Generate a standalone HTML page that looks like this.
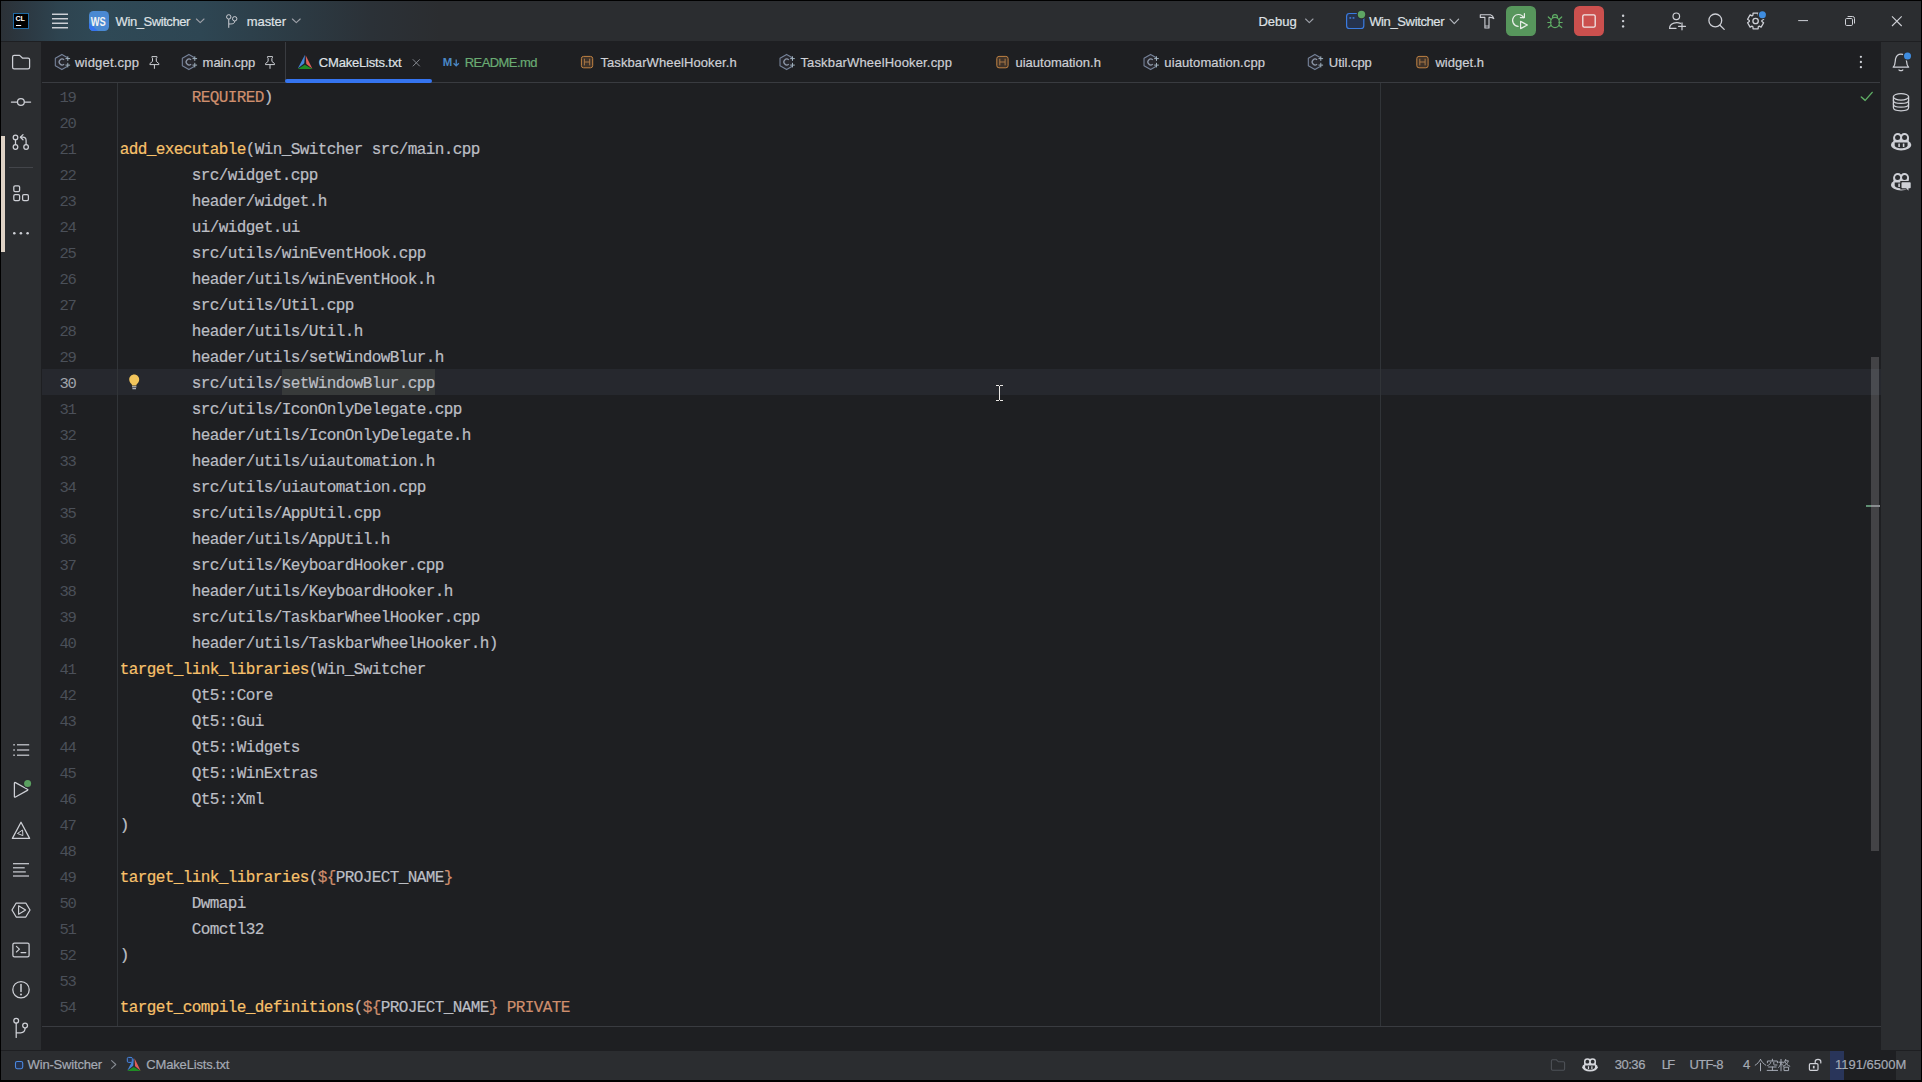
<!DOCTYPE html>
<html><head><meta charset="utf-8"><title>CLion</title>
<style>
html,body{margin:0;padding:0}
body{width:1922px;height:1082px;background:#000;position:relative;overflow:hidden;font-family:"Liberation Sans",sans-serif;}
.abs{position:absolute}
.t{position:absolute;white-space:pre;line-height:20px;font-family:"Liberation Sans",sans-serif;-webkit-text-stroke:0.2px currentColor}
svg{position:absolute;overflow:visible}
#title{position:absolute;left:1px;top:1px;width:1920px;height:40px;background:#2b2d30;}
#titlegrad{position:absolute;left:0;top:0;width:460px;height:40px;background:linear-gradient(90deg,#2b3137 0px,#2c3a44 30px,#2e4450 60px,#2f4956 100px,#2e4653 200px,#2c3a43 300px,#2b3137 370px,#2b2d30 440px);}
#lside{position:absolute;left:1px;top:42px;width:40px;height:1008px;background:#2b2d30;}
#rside{position:absolute;left:1881px;top:42px;width:40px;height:1008px;background:#2b2d30;}
#tabs{position:absolute;left:42px;top:41px;width:1838px;height:41px;background:#1e1f22;border-bottom:1px solid #393b40;}
#editor{position:absolute;left:41px;top:83px;width:1840px;height:967px;background:#1e1f22;overflow:hidden}
#status{position:absolute;left:1px;top:1051px;width:1920px;height:29px;background:#2b2d30;}
.ln{position:absolute;left:1px;width:33.6px;text-align:right;font-family:"Liberation Mono",monospace;font-size:15.5px;letter-spacing:-1.3px;line-height:26px;color:#4b5059;white-space:pre;padding-top:2.4px;height:23.6px}
.cl{position:absolute;left:78.7px;font-family:"Liberation Mono",monospace;font-size:16px;letter-spacing:-0.602px;line-height:26px;color:#bcbec4;white-space:pre;padding-top:2px;height:24px;-webkit-text-stroke:0.2px currentColor}
.f{color:#f8c16b}.k{color:#cf8e6d}
</style></head><body>
<div class="abs" style="left:1px;top:1px;width:1920px;height:1079px;background:#1e1f22"></div>
<div id="title"><div id="titlegrad"></div></div>
<div id="lside"></div><div id="rside"></div><div id="tabs"></div>
<div id="editor">
<div class="abs" style="left:1px;top:286px;width:1839px;height:26px;background:#26282e"></div>
<div class="abs" style="left:76px;top:0;width:1px;height:943px;background:#313438"></div>
<div class="abs" style="left:1339px;top:0;width:1px;height:943px;background:#313438"></div>
<div class="abs" style="left:1px;top:943px;width:1839px;height:1px;background:#393b40"></div>
<div class="abs" style="left:241px;top:286px;width:153px;height:26px;background:#373a3a"></div>
<div class="ln" style="top:0px">19</div>
<div class="cl" style="top:0px">        <span class="k">REQUIRED</span>)</div>
<div class="ln" style="top:26px">20</div>
<div class="ln" style="top:52px">21</div>
<div class="cl" style="top:52px"><span class="f">add_executable</span>(Win_Switcher src/main.cpp</div>
<div class="ln" style="top:78px">22</div>
<div class="cl" style="top:78px">        src/widget.cpp</div>
<div class="ln" style="top:104px">23</div>
<div class="cl" style="top:104px">        header/widget.h</div>
<div class="ln" style="top:130px">24</div>
<div class="cl" style="top:130px">        ui/widget.ui</div>
<div class="ln" style="top:156px">25</div>
<div class="cl" style="top:156px">        src/utils/winEventHook.cpp</div>
<div class="ln" style="top:182px">26</div>
<div class="cl" style="top:182px">        header/utils/winEventHook.h</div>
<div class="ln" style="top:208px">27</div>
<div class="cl" style="top:208px">        src/utils/Util.cpp</div>
<div class="ln" style="top:234px">28</div>
<div class="cl" style="top:234px">        header/utils/Util.h</div>
<div class="ln" style="top:260px">29</div>
<div class="cl" style="top:260px">        header/utils/setWindowBlur.h</div>
<div class="ln" style="top:286px;color:#a1a3ab">30</div>
<div class="cl" style="top:286px">        src/utils/setWindowBlur.cpp</div>
<div class="ln" style="top:312px">31</div>
<div class="cl" style="top:312px">        src/utils/IconOnlyDelegate.cpp</div>
<div class="ln" style="top:338px">32</div>
<div class="cl" style="top:338px">        header/utils/IconOnlyDelegate.h</div>
<div class="ln" style="top:364px">33</div>
<div class="cl" style="top:364px">        header/utils/uiautomation.h</div>
<div class="ln" style="top:390px">34</div>
<div class="cl" style="top:390px">        src/utils/uiautomation.cpp</div>
<div class="ln" style="top:416px">35</div>
<div class="cl" style="top:416px">        src/utils/AppUtil.cpp</div>
<div class="ln" style="top:442px">36</div>
<div class="cl" style="top:442px">        header/utils/AppUtil.h</div>
<div class="ln" style="top:468px">37</div>
<div class="cl" style="top:468px">        src/utils/KeyboardHooker.cpp</div>
<div class="ln" style="top:494px">38</div>
<div class="cl" style="top:494px">        header/utils/KeyboardHooker.h</div>
<div class="ln" style="top:520px">39</div>
<div class="cl" style="top:520px">        src/utils/TaskbarWheelHooker.cpp</div>
<div class="ln" style="top:546px">40</div>
<div class="cl" style="top:546px">        header/utils/TaskbarWheelHooker.h)</div>
<div class="ln" style="top:572px">41</div>
<div class="cl" style="top:572px"><span class="f">target_link_libraries</span>(Win_Switcher</div>
<div class="ln" style="top:598px">42</div>
<div class="cl" style="top:598px">        Qt5::Core</div>
<div class="ln" style="top:624px">43</div>
<div class="cl" style="top:624px">        Qt5::Gui</div>
<div class="ln" style="top:650px">44</div>
<div class="cl" style="top:650px">        Qt5::Widgets</div>
<div class="ln" style="top:676px">45</div>
<div class="cl" style="top:676px">        Qt5::WinExtras</div>
<div class="ln" style="top:702px">46</div>
<div class="cl" style="top:702px">        Qt5::Xml</div>
<div class="ln" style="top:728px">47</div>
<div class="cl" style="top:728px">)</div>
<div class="ln" style="top:754px">48</div>
<div class="ln" style="top:780px">49</div>
<div class="cl" style="top:780px"><span class="f">target_link_libraries</span>(<span class="k">${</span>PROJECT_NAME<span class="k">}</span></div>
<div class="ln" style="top:806px">50</div>
<div class="cl" style="top:806px">        Dwmapi</div>
<div class="ln" style="top:832px">51</div>
<div class="cl" style="top:832px">        Comctl32</div>
<div class="ln" style="top:858px">52</div>
<div class="cl" style="top:858px">)</div>
<div class="ln" style="top:884px">53</div>
<div class="ln" style="top:910px">54</div>
<div class="cl" style="top:910px"><span class="f">target_compile_definitions</span>(<span class="k">${</span>PROJECT_NAME<span class="k">}</span> <span class="k">PRIVATE</span></div>
<div class="abs" style="left:1830px;top:274px;width:8px;height:494px;background:rgba(255,255,255,0.165)"></div>
<div class="abs" style="left:1825px;top:422px;width:5px;height:2px;background:#5f8f73"></div>
<div class="abs" style="left:1830px;top:422px;width:9px;height:2px;background:#8a8c90"></div>
</div>
<div id="status"></div>
<span class="t" style="left:115.60px;top:11.50px;font-size:13px;letter-spacing:-0.431px;color:#dfe1e5;">Win_Switcher</span>
<span class="t" style="left:246.80px;top:11.50px;font-size:13px;letter-spacing:-0.105px;color:#dfe1e5;">master</span>
<span class="t" style="left:1258.40px;top:11.50px;font-size:13px;letter-spacing:0.018px;color:#dfe1e5;">Debug</span>
<span class="t" style="left:1369.20px;top:11.50px;font-size:13px;letter-spacing:-0.372px;color:#dfe1e5;">Win_Switcher</span>
<span class="t" style="left:75.00px;top:52.50px;font-size:13px;letter-spacing:0.205px;color:#ced0d6;">widget.cpp</span>
<span class="t" style="left:202.60px;top:52.50px;font-size:13px;letter-spacing:-0.019px;color:#ced0d6;">main.cpp</span>
<span class="t" style="left:318.80px;top:52.50px;font-size:13px;letter-spacing:-0.189px;color:#dfe1e5;">CMakeLists.txt</span>
<span class="t" style="left:464.80px;top:52.50px;font-size:13px;letter-spacing:-0.588px;color:#6aab73;">README.md</span>
<span class="t" style="left:600.40px;top:52.50px;font-size:13px;letter-spacing:0.100px;color:#ced0d6;">TaskbarWheelHooker.h</span>
<span class="t" style="left:800.40px;top:52.50px;font-size:13px;letter-spacing:0.162px;color:#ced0d6;">TaskbarWheelHooker.cpp</span>
<span class="t" style="left:1015.40px;top:52.50px;font-size:13px;letter-spacing:0.015px;color:#ced0d6;">uiautomation.h</span>
<span class="t" style="left:1164.30px;top:52.50px;font-size:13px;letter-spacing:0.112px;color:#ced0d6;">uiautomation.cpp</span>
<span class="t" style="left:1328.80px;top:52.50px;font-size:13px;letter-spacing:-0.044px;color:#ced0d6;">Util.cpp</span>
<span class="t" style="left:1435.40px;top:52.50px;font-size:13px;letter-spacing:0.035px;color:#ced0d6;">widget.h</span>
<span class="t" style="left:27.60px;top:1054.60px;font-size:13px;letter-spacing:-0.181px;color:#a5aab4;">Win-Switcher</span>
<span class="t" style="left:146.30px;top:1054.60px;font-size:13px;letter-spacing:-0.160px;color:#a5aab4;">CMakeLists.txt</span>
<span class="t" style="left:1614.70px;top:1054.60px;font-size:13px;letter-spacing:-0.466px;color:#a5aab4;">30:36</span>
<span class="t" style="left:1661.80px;top:1054.60px;font-size:13px;letter-spacing:-1.786px;color:#a5aab4;">LF</span>
<span class="t" style="left:1689.60px;top:1054.60px;font-size:13px;letter-spacing:-0.766px;color:#a5aab4;">UTF-8</span>
<span class="t" style="left:1743.00px;top:1054.60px;font-size:13px;letter-spacing:0.000px;color:#a5aab4;">4</span>
<div class="abs" style="left:1830px;top:1051px;width:66px;height:29px;background:#1e1f22"></div><div class="abs" style="left:1830px;top:1051px;width:14px;height:29px;background:#29355a"></div>
<span class="t" style="left:1834.90px;top:1054.60px;font-size:13px;letter-spacing:0.008px;color:#a5aab4;">1191/6500M</span>
<svg width="1922" height="1082" style="left:0;top:0"><rect x="13.5" y="13.5" width="15" height="15" fill="#000" stroke="#1f6aa5" stroke-width="1"/>
<text x="15.4" y="21.3" font-family="Liberation Sans" font-weight="bold" font-size="7.6" fill="#fff" textLength="9.6" lengthAdjust="spacingAndGlyphs">CL</text>
<rect x="16" y="25" width="5.2" height="1" fill="#fff"/>
<rect x="52" y="13.55" width="16" height="1.4" fill="#d6d8dd"/>
<rect x="52" y="18.05" width="16" height="1.4" fill="#d6d8dd"/>
<rect x="52" y="22.55" width="16" height="1.4" fill="#d6d8dd"/>
<rect x="52" y="27.05" width="16" height="1.4" fill="#d6d8dd"/>
<defs><clipPath id="wsclip"><rect x="89" y="11" width="20" height="20" rx="4.5"/></clipPath></defs>
<g clip-path="url(#wsclip)"><rect x="89" y="11" width="20" height="20" fill="#4a89d2"/><path d="M89 23 L98 31 L89 31Z" fill="#3574f0"/></g>
<text x="90.8" y="26" font-family="Liberation Sans" font-weight="bold" font-size="13" fill="#f4f4f4" textLength="15" lengthAdjust="spacingAndGlyphs">WS</text>
<path d="M196.4 19 L200.2 22.7 L204 19" fill="none" stroke="#9da0a8" stroke-width="1.1" stroke-linecap="round" stroke-linejoin="round"/>
<g fill="none" stroke="#ced0d6" stroke-width="1"><circle cx="228.75" cy="16.9" r="2.2"/><circle cx="234.7" cy="18.8" r="2.2"/><path d="M228.75 19.2 V27.8"/><path d="M234.7 21 C234.7 23.6 233 24 229 24"/></g>
<path d="M292.4 19 L296.29999999999995 22.7 L300.2 19" fill="none" stroke="#9da0a8" stroke-width="1.1" stroke-linecap="round" stroke-linejoin="round"/>
<path d="M1305.6 19 L1309.3 22.7 L1313 19" fill="none" stroke="#9da0a8" stroke-width="1.1" stroke-linecap="round" stroke-linejoin="round"/>
<rect x="1346.6" y="13.5" width="17.2" height="15" rx="2.8" fill="#25324d" stroke="#3a7be0" stroke-width="1.2"/>
<rect x="1349.4" y="17.3" width="1.8" height="1.3" fill="#4a8af0"/><rect x="1352.6" y="17.3" width="1.8" height="1.3" fill="#4a8af0"/>
<circle cx="1361.5" cy="14.5" r="4.9" fill="#2b2d30"/><circle cx="1361.5" cy="14.5" r="3.7" fill="#5ea563"/>
<path d="M1450 19.2 L1454.3 23.6 L1458.6 19.2" fill="none" stroke="#b4b8bf" stroke-width="1.2" stroke-linecap="round" stroke-linejoin="round"/>
<g fill="none" stroke="#ced0d6" stroke-width="1.1" stroke-linejoin="round"><path d="M1480.3 14.8 H1490.5 C1492 15.3 1493.3 16.6 1493.8 18.6 C1492.6 17.6 1491.4 17.3 1489 17.4 V28 H1484.9 V17.4 H1480.3 Z"/><path d="M1485 26 H1489" stroke-width="0.9"/></g>
<rect x="1506" y="6" width="30" height="30" rx="5.5" fill="#57965c"/>
<g fill="none" stroke="#e8eee8" stroke-width="1.2" stroke-linecap="round" stroke-linejoin="round"><path d="M1518.2 26.3 A5.9 5.9 0 1 1 1523.7 17.6"/><path d="M1524.4 13.6 V17.6 H1520.4"/><path d="M1520.6 21.4 V28.6 L1527.4 25 Z"/></g>
<g fill="none" stroke="#5fad65" stroke-width="1.2" stroke-linecap="round"><path d="M1552.5 17.4 C1552.5 13.7 1557.5 13.7 1557.5 17.4"/><rect x="1550.7" y="17.4" width="8.6" height="10.2" rx="4.3"/><path d="M1548.3 17 L1550.8 19.3 M1561.7 17 L1559.2 19.3 M1547.8 22.5 H1551 M1559 22.5 H1562.2 M1548.3 27.6 L1550.9 25.6 M1561.7 27.6 L1559.1 25.6"/></g>
<rect x="1574" y="6" width="30" height="30" rx="5.5" fill="#cb504e"/>
<rect x="1582.8" y="14.8" width="12.4" height="12.4" rx="1.4" fill="none" stroke="#f0e8e8" stroke-width="1.3"/>
<circle cx="1623.1" cy="15.8" r="1.2" fill="#ced0d6"/>
<circle cx="1623.1" cy="21.1" r="1.2" fill="#ced0d6"/>
<circle cx="1623.1" cy="26.4" r="1.2" fill="#ced0d6"/>
<g fill="none" stroke="#ced0d6" stroke-width="1.2" stroke-linecap="round"><circle cx="1676.3" cy="16.3" r="3.3"/><path d="M1669.6 28.4 C1669.6 22.5 1677 22 1680.6 23.4"/><path d="M1669.6 28.4 H1676"/><path d="M1682 22.8 V29.8 M1678.5 26.3 H1685.5"/></g>
<g fill="none" stroke="#ced0d6" stroke-width="1.3" stroke-linecap="round"><circle cx="1715.3" cy="20.4" r="6.4"/><path d="M1720 25.2 L1724.2 29.4"/></g>
<path d="M1753.07 13.20 L1758.13 13.20 L1758.28 15.30 L1759.20 15.83 L1761.09 14.91 L1763.62 19.30 L1761.88 20.47 L1761.88 21.53 L1763.62 22.70 L1761.09 27.09 L1759.20 26.17 L1758.28 26.70 L1758.13 28.80 L1753.07 28.80 L1752.92 26.70 L1752.00 26.17 L1750.11 27.09 L1747.58 22.70 L1749.32 21.53 L1749.32 20.47 L1747.58 19.30 L1750.11 14.91 L1752.00 15.83 L1752.92 15.30Z" fill="none" stroke="#ced0d6" stroke-width="1.3" stroke-linejoin="round"/>
<circle cx="1755.6" cy="21" r="2.7" fill="none" stroke="#ced0d6" stroke-width="1.3"/>
<circle cx="1762.4" cy="14.7" r="4.6" fill="#2b2d30"/><circle cx="1762.4" cy="14.7" r="3.5" fill="#3f8de0"/>
<rect x="1798.2" y="20.1" width="9.8" height="1" fill="#ced0d6"/>
<g fill="none" stroke="#ced0d6" stroke-width="1"><rect x="1845.5" y="18.5" width="7" height="7" rx="1.2"/><path d="M1847.6 16.5 H1852.6 Q1854.5 16.5 1854.5 18.4 V23.5"/></g>
<path d="M1892 16.3 L1901.7 26 M1901.7 16.3 L1892 26" stroke="#ced0d6" stroke-width="1.1" fill="none"/>
<path d="M67.68 57.70 L61.90 54.40 L55.32 58.20 L55.32 65.80 L61.90 69.60 L67.68 66.30" fill="#27272d" stroke="#76839a" stroke-width="1.1" stroke-linejoin="round"/><path d="M64.10 59.90 A2.9 2.9 0 1 0 64.10 64.10" fill="none" stroke="#8d97a8" stroke-width="1.25"/><path d="M65.50 58.60 H70.10 M67.80 56.30 V60.90" stroke="#9fb0bd" stroke-width="1" fill="none"/><path d="M65.50 65.10 H70.10 M67.80 62.80 V67.40" stroke="#9fb0bd" stroke-width="1" fill="none"/>
<path d="M151.9 56.6 H156.9 V57.6 L156.3 58.2 V61.4 L158.9 63.6 V64.6 H149.9 V63.6 L152.5 61.4 V58.2 L151.9 57.6 Z M154.4 64.6 V68.8" fill="none" stroke="#ced0d6" stroke-width="1" stroke-linejoin="round"/>
<path d="M194.68 57.70 L188.90 54.40 L182.32 58.20 L182.32 65.80 L188.90 69.60 L194.68 66.30" fill="#27272d" stroke="#76839a" stroke-width="1.1" stroke-linejoin="round"/><path d="M191.10 59.90 A2.9 2.9 0 1 0 191.10 64.10" fill="none" stroke="#8d97a8" stroke-width="1.25"/><path d="M192.50 58.60 H197.10 M194.80 56.30 V60.90" stroke="#9fb0bd" stroke-width="1" fill="none"/><path d="M192.50 65.10 H197.10 M194.80 62.80 V67.40" stroke="#9fb0bd" stroke-width="1" fill="none"/>
<path d="M267.5 56.6 H272.5 V57.6 L271.9 58.2 V61.4 L274.5 63.6 V64.6 H265.5 V63.6 L268.09999999999997 61.4 V58.2 L267.5 57.6 Z M270.0 64.6 V68.8" fill="none" stroke="#ced0d6" stroke-width="1" stroke-linejoin="round"/>
<rect x="285" y="42" width="1" height="40" fill="#393b40"/>
<rect x="285" y="79" width="147" height="4" rx="2" fill="#3574f0"/>
<path d="M305.01 54.80 L297.80 68.58 L304.28 63.33Z" fill="#4685d8"/><path d="M305.60 55.23 L306.34 63.89 L312.37 68.87Z" fill="#e0605a"/><path d="M297.80 69.01 L304.72 64.75 L312.52 69.01Z" fill="#1f8c24"/>
<path d="M412.8 59.3 L419.8 66.3 M419.8 59.3 L412.8 66.3" stroke="#868a91" stroke-width="1" fill="none"/>
<text x="442.8" y="66.4" font-family="Liberation Sans" font-weight="bold" font-size="10.2" fill="#4a88c7" textLength="9.5" lengthAdjust="spacingAndGlyphs">M</text>
<path d="M456.2 59.4 V65.6 M453.6 63.2 L456.2 65.9 L458.8 63.2" stroke="#4a88c7" stroke-width="1.3" fill="none"/>
<rect x="581.40" y="56.40" width="11.3" height="11.4" rx="2.2" fill="#3f332a" stroke="#c08243" stroke-width="1"/><path d="M584.40 58.70 V65.40 M589.70 58.70 V65.40 M584.40 62.00 H589.70" stroke="#b07c48" stroke-width="0.95" fill="none"/>
<path d="M792.38 57.70 L786.60 54.40 L780.02 58.20 L780.02 65.80 L786.60 69.60 L792.38 66.30" fill="#27272d" stroke="#76839a" stroke-width="1.1" stroke-linejoin="round"/><path d="M788.80 59.90 A2.9 2.9 0 1 0 788.80 64.10" fill="none" stroke="#8d97a8" stroke-width="1.25"/><path d="M790.20 58.60 H794.80 M792.50 56.30 V60.90" stroke="#9fb0bd" stroke-width="1" fill="none"/><path d="M790.20 65.10 H794.80 M792.50 62.80 V67.40" stroke="#9fb0bd" stroke-width="1" fill="none"/>
<rect x="996.80" y="56.40" width="11.3" height="11.4" rx="2.2" fill="#3f332a" stroke="#c08243" stroke-width="1"/><path d="M999.80 58.70 V65.40 M1005.10 58.70 V65.40 M999.80 62.00 H1005.10" stroke="#b07c48" stroke-width="0.95" fill="none"/>
<path d="M1156.38 57.70 L1150.60 54.40 L1144.02 58.20 L1144.02 65.80 L1150.60 69.60 L1156.38 66.30" fill="#27272d" stroke="#76839a" stroke-width="1.1" stroke-linejoin="round"/><path d="M1152.80 59.90 A2.9 2.9 0 1 0 1152.80 64.10" fill="none" stroke="#8d97a8" stroke-width="1.25"/><path d="M1154.20 58.60 H1158.80 M1156.50 56.30 V60.90" stroke="#9fb0bd" stroke-width="1" fill="none"/><path d="M1154.20 65.10 H1158.80 M1156.50 62.80 V67.40" stroke="#9fb0bd" stroke-width="1" fill="none"/>
<path d="M1320.68 57.70 L1314.90 54.40 L1308.32 58.20 L1308.32 65.80 L1314.90 69.60 L1320.68 66.30" fill="#27272d" stroke="#76839a" stroke-width="1.1" stroke-linejoin="round"/><path d="M1317.10 59.90 A2.9 2.9 0 1 0 1317.10 64.10" fill="none" stroke="#8d97a8" stroke-width="1.25"/><path d="M1318.50 58.60 H1323.10 M1320.80 56.30 V60.90" stroke="#9fb0bd" stroke-width="1" fill="none"/><path d="M1318.50 65.10 H1323.10 M1320.80 62.80 V67.40" stroke="#9fb0bd" stroke-width="1" fill="none"/>
<rect x="1416.80" y="56.40" width="11.3" height="11.4" rx="2.2" fill="#3f332a" stroke="#c08243" stroke-width="1"/><path d="M1419.80 58.70 V65.40 M1425.10 58.70 V65.40 M1419.80 62.00 H1425.10" stroke="#b07c48" stroke-width="0.95" fill="none"/>
<circle cx="1860.9" cy="56.8" r="1.15" fill="#ced0d6"/>
<circle cx="1860.9" cy="62" r="1.15" fill="#ced0d6"/>
<circle cx="1860.9" cy="67.2" r="1.15" fill="#ced0d6"/>
<rect x="1" y="136" width="4" height="116" fill="#ded2c5"/>
<path d="M12.6 57 Q12.6 55.4 14.2 55.4 H19.6 L22.4 58 H28 Q29.6 58 29.6 59.6 V67.3 Q29.6 68.9 28 68.9 H14.2 Q12.6 68.9 12.6 67.3 Z" fill="none" stroke="#ced0d6" stroke-width="1.25" stroke-linecap="round" stroke-linejoin="round"/>
<g fill="none" stroke="#ced0d6" stroke-width="1.25" stroke-linecap="round" stroke-linejoin="round"><path d="M11.4 102 H17.2 M24.6 102 H30.6"/><circle cx="20.9" cy="102" r="3.4"/></g>
<g fill="none" stroke="#ced0d6" stroke-width="1.25" stroke-linecap="round" stroke-linejoin="round" stroke-width="1.1"><circle cx="15.5" cy="137.4" r="2.3"/><circle cx="15.5" cy="147" r="2.3"/><circle cx="26.1" cy="147" r="2.3"/><path d="M15.5 139.8 V144.6"/><path d="M26.1 144.6 V140.5 Q26.1 137.2 22.8 137.2 H20.6"/><path d="M23 134.6 L20.4 137.2 L23 139.8"/></g>
<rect x="9" y="167" width="24" height="1" fill="#43454a"/>
<g fill="none" stroke="#ced0d6" stroke-width="1.25" stroke-linecap="round" stroke-linejoin="round" stroke-width="1.2"><rect x="13.8" y="185.8" width="5.8" height="5.8" rx="1.3"/><rect x="13.8" y="194.7" width="5.8" height="5.8" rx="1.3"/><rect x="22.6" y="194.7" width="5.8" height="5.8" rx="1.3"/></g>
<circle cx="14.3" cy="233.3" r="1.3" fill="#ced0d6"/>
<circle cx="20.9" cy="233.3" r="1.3" fill="#ced0d6"/>
<circle cx="27.6" cy="233.3" r="1.3" fill="#ced0d6"/>
<rect x="17" y="744.1999999999999" width="12.2" height="1.2" fill="#ced0d6"/><rect x="13.3" y="744.0999999999999" width="1.5" height="1.4" fill="#ced0d6"/>
<rect x="17" y="749.4" width="12.2" height="1.2" fill="#ced0d6"/><rect x="13.3" y="749.3" width="1.5" height="1.4" fill="#ced0d6"/>
<rect x="17" y="754.6" width="12.2" height="1.2" fill="#ced0d6"/><rect x="13.3" y="754.5" width="1.5" height="1.4" fill="#ced0d6"/>
<path d="M14.4 783.2 Q14.4 782 15.5 782.6 L27.4 789.2 Q28.4 789.8 27.4 790.4 L15.5 797 Q14.4 797.6 14.4 796.4 Z" fill="none" stroke="#ced0d6" stroke-width="1.25" stroke-linecap="round" stroke-linejoin="round"/>
<circle cx="27.6" cy="783.5" r="4.7" fill="#2b2d30"/><circle cx="27.6" cy="783.5" r="3.5" fill="#5ba160"/>
<g fill="none" stroke="#ced0d6" stroke-width="1.25" stroke-linecap="round" stroke-linejoin="round" stroke-width="1.15"><path d="M21 822.2 L29.6 838.4 H12.4 Z"/><path d="M22.6 830.4 L22.9 835.6 L17.8 833.6 Z" stroke-width="1"/></g>
<rect x="13" y="863.1" width="16" height="1.2" fill="#ced0d6"/>
<rect x="13" y="867.1999999999999" width="11.7" height="1.2" fill="#ced0d6"/>
<rect x="13" y="871.3" width="12.8" height="1.2" fill="#ced0d6"/>
<rect x="13" y="875.4" width="16" height="1.2" fill="#ced0d6"/>
<g fill="none" stroke="#ced0d6" stroke-width="1.25" stroke-linecap="round" stroke-linejoin="round"><path d="M16.2 903 H25.8 L30 910 L25.8 917 H16.2 L12 910 Z"/><path d="M18.6 905.8 V914.2 L25.6 910 Z" stroke-width="1.15"/></g>
<g fill="none" stroke="#ced0d6" stroke-width="1.25" stroke-linecap="round" stroke-linejoin="round"><rect x="12.9" y="943" width="16.2" height="13.8" rx="1.6"/><path d="M16.4 946.4 L19.4 949.2 L16.4 952" stroke-width="1.15"/><path d="M21 952.6 H25.8" stroke-width="1.15"/></g>
<g fill="none" stroke="#ced0d6" stroke-width="1.25" stroke-linecap="round" stroke-linejoin="round"><circle cx="21" cy="989.7" r="8.2"/><path d="M21 984.6 V991.4" stroke-width="1.5"/></g><circle cx="21" cy="994.6" r="1" fill="#ced0d6"/>
<g fill="none" stroke="#ced0d6" stroke-width="1.25" stroke-linecap="round" stroke-linejoin="round" stroke-width="1.1"><circle cx="16.2" cy="1020.7" r="2.4"/><circle cx="25.1" cy="1025.6" r="2.4"/><path d="M16.2 1023.2 V1037.4"/><path d="M25.1 1028.1 Q25.1 1032.8 20.6 1032.8 H16.4"/></g>
<path d="M1861.3 97 L1865.2 100.4 L1872.2 92.4" fill="none" stroke="#5fad65" stroke-width="1.4" stroke-linecap="round" stroke-linejoin="round"/>
<g fill="none" stroke="#ced0d6" stroke-width="1.25" stroke-linecap="round" stroke-linejoin="round"><path d="M1893.2 67.2 C1895.8 64.6 1895 61 1895.6 58.6 C1896.6 55 1899 54 1900.9 54 C1902.8 54 1905.2 55 1906.2 58.6 C1906.8 61 1906 64.6 1908.6 67.2 Z"/><path d="M1899 69.9 Q1900.9 71.3 1902.8 69.9"/></g>
<circle cx="1907.5" cy="56" r="4.7" fill="#2b2d30"/><circle cx="1907.5" cy="56" r="3.5" fill="#3f8de0"/>
<g fill="none" stroke="#ced0d6" stroke-width="1.25" stroke-linecap="round" stroke-linejoin="round"><ellipse cx="1901" cy="96.8" rx="7.6" ry="3.2"/><path d="M1893.4 96.8 V107.6 C1893.4 111.9 1908.6 111.9 1908.6 107.6 V96.8"/><path d="M1893.4 100.2 C1893.4 104.5 1908.6 104.5 1908.6 100.2"/><path d="M1893.4 103.9 C1893.4 108.2 1908.6 108.2 1908.6 103.9"/></g>
<g transform="translate(1901.1,142) scale(1.0)"><ellipse cx="0" cy="2.9" rx="10.2" ry="5.5" fill="#ced0d6"/><rect x="-7.6" y="-4.3" width="15.2" height="6" fill="#ced0d6"/><circle cx="-3.35" cy="-4.3" r="4.6" fill="#ced0d6"/><circle cx="3.35" cy="-4.3" r="4.6" fill="#ced0d6"/><circle cx="-3.5" cy="-4.4" r="2.5" fill="#2b2d30"/><circle cx="3.5" cy="-4.4" r="2.5" fill="#2b2d30"/><path d="M-6.4 0.5 H6.5 V3.4 C6.5 5 3.6 6.2 0 6.2 C-3.6 6.2 -6.4 5 -6.4 3.4 Z" fill="#2b2d30"/><rect x="-2.8" y="1.5" width="1.6" height="3.6" rx="0.3" fill="#ced0d6"/><rect x="1.7" y="1.5" width="1.6" height="3.6" rx="0.3" fill="#ced0d6"/></g>
<g transform="translate(1901.1,182) scale(1.0)"><ellipse cx="0" cy="2.9" rx="10.2" ry="5.5" fill="#ced0d6"/><rect x="-7.6" y="-4.3" width="15.2" height="6" fill="#ced0d6"/><circle cx="-3.35" cy="-4.3" r="4.6" fill="#ced0d6"/><circle cx="3.35" cy="-4.3" r="4.6" fill="#ced0d6"/><circle cx="-3.5" cy="-4.4" r="2.5" fill="#2b2d30"/><circle cx="3.5" cy="-4.4" r="2.5" fill="#2b2d30"/><path d="M-6.4 0.5 H6.5 V3.4 C6.5 5 3.6 6.2 0 6.2 C-3.6 6.2 -6.4 5 -6.4 3.4 Z" fill="#2b2d30"/><rect x="-2.8" y="1.5" width="1.6" height="3.6" rx="0.3" fill="#ced0d6"/><path d="M-0.8 -1 H11.4 V7.6 H8.4 V10.6 L5.4 7.6 H-0.8 Z" fill="#2b2d30"/><path d="M1.2 0.3 H8.8 Q9.6 0.3 9.6 1.1 V5.4 Q9.6 6.2 8.8 6.2 H7.4 V8.8 L5 6.2 H1.2 Q0.4 6.2 0.4 5.4 V1.1 Q0.4 0.3 1.2 0.3 Z" fill="#ced0d6"/></g>
<rect x="15.5" y="1061.5" width="7.2" height="7.2" rx="1.6" fill="#25324d" stroke="#4a88e0" stroke-width="1.1"/>
<path d="M111.6 1060.6 L115.8 1064.5 L111.6 1068.4" fill="none" stroke="#868a91" stroke-width="1.1" stroke-linecap="round" stroke-linejoin="round"/>
<path d="M133.91 1057.90 L127.30 1070.53 L133.23 1065.71Z" fill="#4685d8"/><path d="M134.45 1058.29 L135.12 1066.23 L140.65 1070.79Z" fill="#e0605a"/><path d="M127.30 1070.92 L133.64 1067.01 L140.78 1070.92Z" fill="#1f8c24"/>
<rect x="127.3" y="1057.4" width="5" height="5" rx="1.2" fill="#25324d" stroke="#4a88e0" stroke-width="1"/>
<path d="M1551.4 1061 Q1551.4 1059.8 1552.6 1059.8 H1556.4 L1558.4 1061.8 H1563.4 Q1564.6 1061.8 1564.6 1063 V1069 Q1564.6 1070.2 1563.4 1070.2 H1552.6 Q1551.4 1070.2 1551.4 1069 Z" fill="none" stroke="#4e5157" stroke-width="1.1"/>
<g transform="translate(1590,1065) scale(0.76)"><ellipse cx="0" cy="2.9" rx="10.2" ry="5.5" fill="#d5d7dc"/><rect x="-7.6" y="-4.3" width="15.2" height="6" fill="#d5d7dc"/><circle cx="-3.35" cy="-4.3" r="4.6" fill="#d5d7dc"/><circle cx="3.35" cy="-4.3" r="4.6" fill="#d5d7dc"/><circle cx="-3.5" cy="-4.4" r="2.5" fill="#2b2d30"/><circle cx="3.5" cy="-4.4" r="2.5" fill="#2b2d30"/><path d="M-6.4 0.5 H6.5 V3.4 C6.5 5 3.6 6.2 0 6.2 C-3.6 6.2 -6.4 5 -6.4 3.4 Z" fill="#2b2d30"/><rect x="-2.8" y="1.5" width="1.6" height="3.6" rx="0.3" fill="#d5d7dc"/><rect x="1.7" y="1.5" width="1.6" height="3.6" rx="0.3" fill="#d5d7dc"/></g>
<g fill="none" stroke="#a5aab4" stroke-width="1" stroke-linecap="round" stroke-linejoin="round" transform="translate(1754.8,1059)"><path d="M5.7 0.4 C4.6 2.8 2.6 4.8 0.4 6.2 M5.7 0.4 C6.8 2.8 8.8 4.8 11 6.2 M5.7 4.2 V11.8"/></g>
<g fill="none" stroke="#a5aab4" stroke-width="1" stroke-linecap="round" stroke-linejoin="round" transform="translate(1766.6,1059)"><path d="M5.8 0.2 V1.8 M0.8 3.8 V2 H10.8 V3.8 M4.2 3.4 C3.8 5 2.6 6 1 6.6 M7.2 3.4 V5.4 Q7.2 6 7.8 6 H10.4 M2 8 H9.6 M5.8 8 V11.4 M0.6 11.4 H11"/></g>
<g fill="none" stroke="#a5aab4" stroke-width="1" stroke-linecap="round" stroke-linejoin="round" transform="translate(1778.3999999999999,1059)"><path d="M0.4 3.2 H4.8 M2.6 0.4 V11.8 M2.6 3.6 C2.2 5.6 1.4 7.2 0.3 8.4 M2.8 4.6 L4.6 6.4 M7.4 0.4 C6.8 2 6 3.2 5 4.2 M6.8 1.8 H10 C9.2 4.4 7.4 6.2 4.8 7.4 M6.6 3 C7.6 5 9.2 6.4 11.4 7.2 M6 8.2 H10.2 V11.6 H6 Z"/></g>
<g fill="none" stroke="#d0d2d8" stroke-width="1.2" stroke-linecap="round"><rect x="1809.4" y="1063.6" width="8.6" height="6.8" rx="1.2"/><path d="M1815.2 1063.4 V1061.6 C1815.2 1058.6 1820.8 1058.6 1820.8 1061.6 V1063"/></g><rect x="1812.9" y="1065.8" width="1.7" height="2.6" fill="#d0d2d8"/>
<g fill="#e9e7e4"><rect x="996" y="385" width="3" height="1"/><rect x="1000" y="385" width="3" height="1"/><rect x="999" y="386" width="1" height="14"/><rect x="996" y="400" width="3" height="1"/><rect x="1000" y="400" width="3" height="1"/></g>
<path d="M134.2 374.6 C131.4 374.6 129.2 376.8 129.2 379.5 C129.2 381.4 130.2 382.7 131.2 383.7 C131.8 384.3 132 384.8 132 385.4 H136.4 C136.4 384.8 136.6 384.3 137.2 383.7 C138.2 382.7 139.2 381.4 139.2 379.5 C139.2 376.8 137 374.6 134.2 374.6 Z" fill="#f2c55c"/>
<rect x="132" y="386.3" width="4.4" height="1" fill="#d6d8dc"/><rect x="132.4" y="388.2" width="3.6" height="1" fill="#d6d8dc"/></svg>
</body></html>
